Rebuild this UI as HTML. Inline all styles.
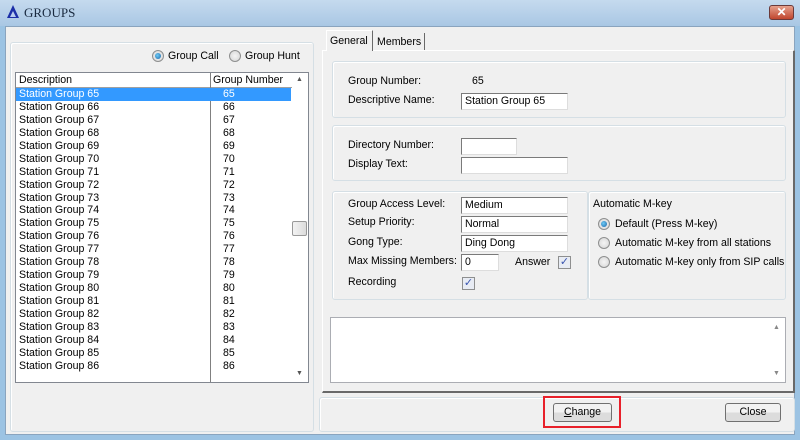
<!DOCTYPE html>
<html><head><style>
*{box-sizing:border-box;margin:0;padding:0}
body{width:800px;height:440px;overflow:hidden;background:#9cc3e3;font-family:"Liberation Sans",sans-serif;font-size:10.6px;color:#000;position:relative}
.a{position:absolute}
.title{left:0;top:0;width:800px;height:26px;background:linear-gradient(#c5daee,#a9c7e4)}
.client{left:5px;top:26px;width:790px;height:409px;background:#f0f0f0;border:1px solid #8aa4be}
.gb{position:absolute;border:1px solid #d5dfe5;border-radius:3px;box-shadow:inset 1px 1px 0 #fff}
.tb{position:absolute;background:#fff;border:1px solid #7a7a7a;border-right-color:#ddd;border-bottom-color:#ddd;height:17px;padding:1px 3px;line-height:13px;font-size:10.6px}
.rad{position:absolute;width:12px;height:12px;border-radius:50%;border:1px solid #8e8f8f;background:radial-gradient(#f4f4f4,#d5d5d5)}
.rad.on::after{content:"";position:absolute;left:2px;top:2px;width:6px;height:6px;border-radius:50%;background:radial-gradient(circle at 40% 40%,#6ecbf5,#1a64a8)}
.cb{position:absolute;width:13px;height:13px;border:1px solid #8e8f8f;background:#e8ecf4;color:#3a56b0;font-size:11px;line-height:11px;text-align:center}
.btn{position:absolute;height:19px;border:1px solid #707070;border-radius:3px;background:linear-gradient(#f2f2f2 50%,#dcdcdc 50%);text-align:center;line-height:17px;font-size:10.6px}
.row{height:12.95px;line-height:13px;white-space:nowrap}
</style></head><body>
<div class="a title"></div>
<div class="a" style="left:7px;top:5px;width:0;height:0;border-left:6px solid transparent;border-right:6px solid transparent;border-bottom:13px solid #1c2fa8"></div>
<div class="a" style="left:10px;top:11px;width:0;height:0;border-left:3px solid transparent;border-right:3px solid transparent;border-bottom:6px solid #b9cdf0"></div>
<div class="a" style="left:24px;top:5px;font-family:'Liberation Serif',serif;font-size:13px;color:#1a2a40">GROUPS</div>
<div class="a" style="left:769px;top:5px;width:25px;height:15px;border:1px solid #6b3a3a;border-radius:3px;background:linear-gradient(#e6a08c,#c0462e);color:#fff;font-weight:bold;text-align:center;line-height:13px;font-size:12px">✕</div>
<div class="a client"></div>

<div class="gb" style="left:10px;top:42px;width:304px;height:390px"></div>
<div class="rad on" style="left:152px;top:50px"></div>
<div class="a" style="left:168px;top:50px">Group Call</div>
<div class="rad" style="left:229px;top:50px"></div>
<div class="a" style="left:245px;top:50px">Group Hunt</div>
<div class="a" style="left:15px;top:72px;width:294px;height:311px;background:#fff;border:1px solid #828790"></div>
<div class="a" style="left:16px;top:73px;width:276px;height:15px;border-bottom:1px solid #a0a0a0"></div>
<div class="a" style="left:210px;top:73px;width:1px;height:309px;background:#808080"></div>
<div class="a" style="left:19px;top:74px">Description</div>
<div class="a" style="left:213px;top:74px">Group Number</div>
<div class="a" style="left:16px;top:88px;width:275px;height:13px;background:#3399ff"></div>
<div class="a" style="left:19px;top:88px;width:270px;color:#000">
<div class="row" style="color:#fff">Station Group 65</div><div class="row">Station Group 66</div><div class="row">Station Group 67</div><div class="row">Station Group 68</div><div class="row">Station Group 69</div><div class="row">Station Group 70</div><div class="row">Station Group 71</div><div class="row">Station Group 72</div><div class="row">Station Group 73</div><div class="row">Station Group 74</div><div class="row">Station Group 75</div><div class="row">Station Group 76</div><div class="row">Station Group 77</div><div class="row">Station Group 78</div><div class="row">Station Group 79</div><div class="row">Station Group 80</div><div class="row">Station Group 81</div><div class="row">Station Group 82</div><div class="row">Station Group 83</div><div class="row">Station Group 84</div><div class="row">Station Group 85</div><div class="row">Station Group 86</div>
</div>
<div class="a" style="left:223px;top:88px">
<div class="row" style="color:#fff">65</div><div class="row">66</div><div class="row">67</div><div class="row">68</div><div class="row">69</div><div class="row">70</div><div class="row">71</div><div class="row">72</div><div class="row">73</div><div class="row">74</div><div class="row">75</div><div class="row">76</div><div class="row">77</div><div class="row">78</div><div class="row">79</div><div class="row">80</div><div class="row">81</div><div class="row">82</div><div class="row">83</div><div class="row">84</div><div class="row">85</div><div class="row">86</div>
</div>
<div class="a" style="left:296px;top:76px;font-size:7px;color:#555">▲</div>
<div class="a" style="left:296px;top:370px;font-size:7px;color:#555">▼</div>
<div class="a" style="left:292px;top:221px;width:15px;height:15px;border:1px solid #999;border-radius:2px;background:linear-gradient(90deg,#f3f3f3,#dcdcdc)"></div>

<div class="a" style="left:322px;top:50px;width:473px;height:343px;border:1px solid #fff;border-right:2px solid #696969;border-bottom:2px solid #696969"></div>
<div class="a" style="left:326px;top:30px;width:47px;height:21px;background:#f0f0f0;border:1px solid #fff;border-bottom:none;border-right:1px solid #696969;padding:4px 3px">General</div>
<div class="a" style="left:374px;top:33px;width:51px;height:17px;border-right:1px solid #696969;padding:3px 3px">Members</div>

<div class="gb" style="left:332px;top:61px;width:454px;height:57px"></div>
<div class="a" style="left:348px;top:75px">Group Number:</div>
<div class="a" style="left:472px;top:75px">65</div>
<div class="a" style="left:348px;top:94px">Descriptive Name:</div>
<div class="tb" style="left:461px;top:93px;width:107px">Station Group 65</div>

<div class="gb" style="left:332px;top:125px;width:454px;height:56px"></div>
<div class="a" style="left:348px;top:139px">Directory Number:</div>
<div class="tb" style="left:461px;top:138px;width:56px"></div>
<div class="a" style="left:348px;top:158px">Display Text:</div>
<div class="tb" style="left:461px;top:157px;width:107px"></div>

<div class="gb" style="left:332px;top:191px;width:256px;height:109px"></div>
<div class="gb" style="left:588px;top:191px;width:198px;height:109px"></div>
<div class="a" style="left:348px;top:198px">Group Access Level:</div>
<div class="tb" style="left:461px;top:197px;width:107px">Medium</div>
<div class="a" style="left:348px;top:216px">Setup Priority:</div>
<div class="tb" style="left:461px;top:216px;width:107px">Normal</div>
<div class="a" style="left:348px;top:236px">Gong Type:</div>
<div class="tb" style="left:461px;top:235px;width:107px">Ding Dong</div>
<div class="a" style="left:348px;top:255px">Max Missing Members:</div>
<div class="tb" style="left:461px;top:254px;width:38px">0</div>
<div class="a" style="left:515px;top:256px">Answer</div>
<div class="cb" style="left:558px;top:256px">✓</div>
<div class="a" style="left:348px;top:276px">Recording</div>
<div class="cb" style="left:462px;top:277px">✓</div>

<div class="a" style="left:593px;top:198px">Automatic M-key</div>
<div class="rad on" style="left:598px;top:218px"></div>
<div class="a" style="left:615px;top:218px">Default (Press M-key)</div>
<div class="rad" style="left:598px;top:237px"></div>
<div class="a" style="left:615px;top:237px">Automatic M-key from all stations</div>
<div class="rad" style="left:598px;top:256px"></div>
<div class="a" style="left:615px;top:256px">Automatic M-key only from SIP calls</div>

<div class="a" style="left:330px;top:317px;width:456px;height:66px;background:#fff;border:1px solid #abadb3"></div>
<div class="a" style="left:773px;top:324px;font-size:7px;color:#888">▲</div>
<div class="a" style="left:773px;top:370px;font-size:7px;color:#888">▼</div>

<div class="gb" style="left:319px;top:397px;width:476px;height:35px"></div>
<div class="btn" style="left:553px;top:403px;width:59px"><u>C</u>hange</div>
<div class="a" style="left:543px;top:396px;width:78px;height:32px;border:2px solid #e8202a"></div>
<div class="btn" style="left:725px;top:403px;width:56px">Close</div>
</body></html>
